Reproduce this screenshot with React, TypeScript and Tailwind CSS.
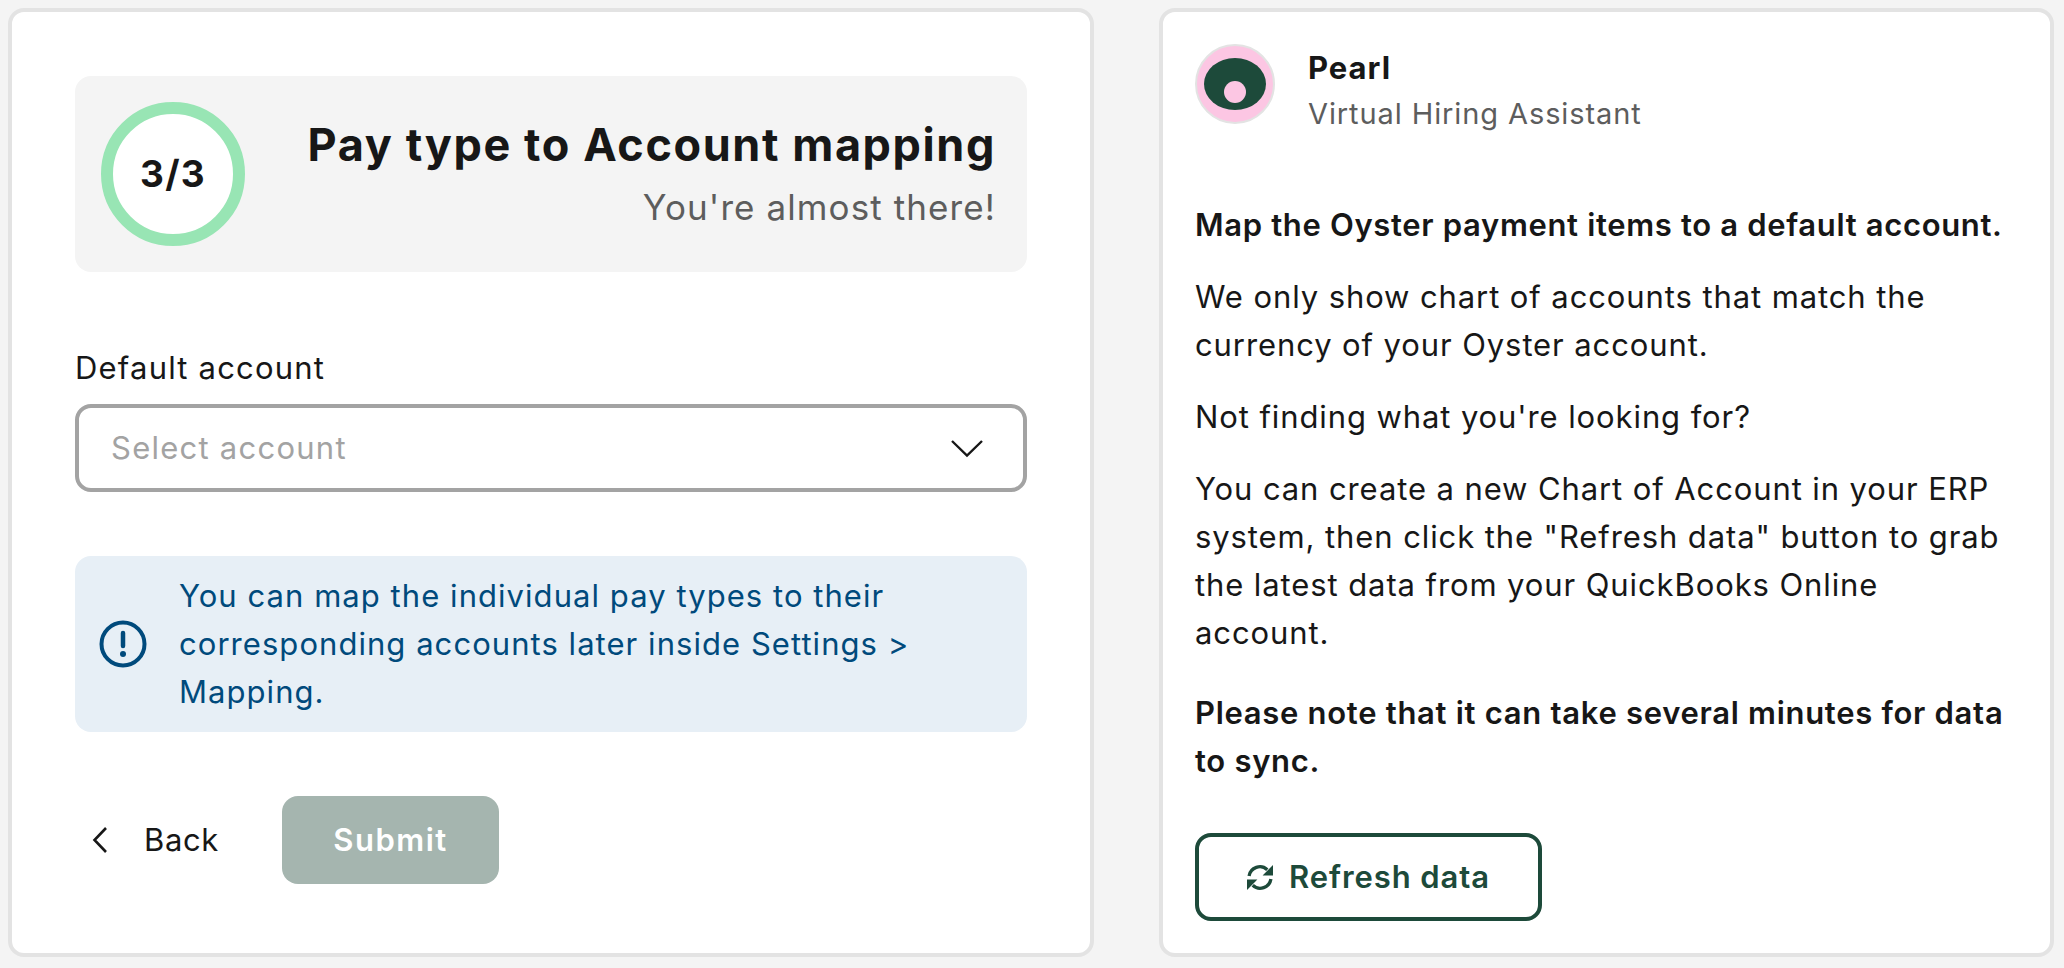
const FONT = "font-['Inter',sans-serif]"

function Chevron({ className }: { className?: string }) {
  return (
    <svg viewBox="0 0 36 20" fill="none" stroke="currentColor" strokeWidth="2.4" className={className}>
      <path d="M3 3 L18 17.5 L33 3" />
    </svg>
  )
}

function RefreshIcon() {
  return (
    <svg viewBox="1.500 2 25 24" className="h-[25px] w-[26px] text-[#1d4a3a]" fill="none">
      <path d="M3.5 12.5 A10.5 10.5 0 0 1 21 6.5" stroke="currentColor" strokeWidth="3.2" />
      <path d="M24.5 15.5 A10.5 10.5 0 0 1 7 21.500" stroke="currentColor" strokeWidth="3.2" />
      <path d="M26.500 2 V12 H16.500 Z" fill="currentColor" />
      <path d="M1.500 26 V16 H11.500 Z" fill="currentColor" />
    </svg>
  )
}

function WizardCard() {
  return (
    <div className="flex h-[949px] w-[1086px] shrink-0 flex-col rounded-[16px] border-4 border-[#e3e3e3] bg-white px-[63px] pt-[64px]">
      <div className="flex h-[196px] items-center justify-between rounded-[16px] bg-[#f4f4f4] pl-[26px] pr-[31px]">
        <div className="flex h-[144px] w-[144px] shrink-0 items-center justify-center rounded-full border-[12px] border-[#98e5b4] bg-white">
          <span className="text-[37px] font-bold tracking-[1.3px] text-[#171717]">3/3</span>
        </div>
        <div className="flex flex-col items-end gap-[10px]">
          <h1 className="text-[45px] leading-[56px] font-bold tracking-[1.6px] whitespace-nowrap text-[#171717]">Pay type to Account mapping</h1>
          <p className="text-[35px] leading-[48px] tracking-[1.1px] text-[#5d5d5d]">You're almost there!</p>
        </div>
      </div>

      <label className="mt-[72px] text-[31px] leading-[48px] tracking-[1.2px] text-[#171717]">Default account</label>
      <div className="mt-[12px] flex h-[88px] items-center justify-between rounded-[16px] border-4 border-[#a3a3a3] pl-[32px] pr-[38px]">
        <span className="text-[31px] tracking-[1.25px] text-[#a3a3a3]">Select account</span>
        <Chevron className="h-[20px] w-[36px] text-[#171717]" />
      </div>

      <div className="mt-[64px] flex h-[176px] items-center gap-[32px] rounded-[16px] bg-[#e7eff6] pl-[24px]">
        <svg viewBox="0 0 48 48" className="h-[48px] w-[48px] shrink-0 text-[#004a7c]" fill="none" stroke="currentColor">
          <circle cx="24" cy="24" r="21.500" strokeWidth="4" />
          <path d="M24 13 V26" strokeWidth="4.500" strokeLinecap="round" />
          <circle cx="24" cy="34" r="3" fill="currentColor" stroke="none" />
        </svg>
        <p className="w-[780px] text-[31px] leading-[48px] tracking-[1.05px] text-[#004a7c]">
          You can map the individual pay types to their corresponding accounts later inside Settings &gt; Mapping.
        </p>
      </div>

      <div className="mt-[64px] flex items-center">
        <button className="flex w-[207px] items-center gap-[36px] pl-[17px] text-[31px] tracking-[0.6px] text-[#171717]">
          <svg viewBox="0 0 16 28" className="h-[28px] w-[16px]" fill="none" stroke="currentColor" strokeWidth="2.600">
            <path d="M14 2 L2.500 14 L14 26" />
          </svg>
          Back
        </button>
        <button className="h-[88px] w-[217px] rounded-[16px] bg-[#a5b5af] text-[31px] font-semibold tracking-[1.5px] text-white">Submit</button>
      </div>
    </div>
  )
}

function AssistantCard() {
  return (
    <div className="flex h-[949px] w-[895px] shrink-0 flex-col rounded-[16px] border-4 border-[#e3e3e3] bg-white px-[32px] pt-[32px]">
      <div className="flex items-start gap-[33px]">
        <div className="flex h-[80px] w-[80px] shrink-0 items-center justify-center rounded-full border-2 border-[#e3e3e3] bg-[#fcc6e3]">
          <svg viewBox="0 0 62 52" className="h-[52px] w-[62px]">
            <ellipse cx="31" cy="26" rx="31" ry="26" fill="#1d4a3a" />
            <circle cx="31" cy="34" r="11" fill="#fcc6e3" />
          </svg>
        </div>
        <div className="flex flex-col">
          <span className="text-[31px] leading-[48px] font-bold tracking-[1px] text-[#171717]">Pearl</span>
          <span className="text-[29px] leading-[44px] tracking-[0.9px] text-[#5d5d5d]">Virtual Hiring Assistant</span>
        </div>
      </div>

      <div className="mt-[65px] flex flex-col gap-[24px] text-[31px] leading-[48px] tracking-[0.9px] text-[#171717]">
        <p className="font-semibold tracking-[0.66px]">Map the Oyster payment items to a default account.</p>
        <p>We only show chart of accounts that match the currency of your Oyster account.</p>
        <p>Not finding what you're looking for?</p>
        <p>
          You can create a new Chart of Account in your ERP system, then click the "Refresh data" button to grab the
          latest data from your QuickBooks Online account.
        </p>
        <p className="mt-[8px] font-semibold tracking-[0.7px]">Please note that it can take several minutes for data to sync.</p>
      </div>

      <button className="mt-[48px] flex h-[88px] w-[347px] items-center justify-center gap-[16px] rounded-[16px] border-4 border-[#1d4a3a] text-[31px] font-semibold tracking-[0.9px] text-[#1d4a3a]">
        <RefreshIcon />
        Refresh data
      </button>
    </div>
  )
}

export default function App() {
  return (
    <div className={`flex h-[968px] gap-[65px] bg-[#f4f4f4] pl-[8px] pt-[8px] ${FONT}`}>
      <WizardCard />
      <AssistantCard />
    </div>
  )
}
